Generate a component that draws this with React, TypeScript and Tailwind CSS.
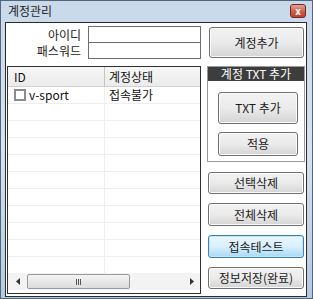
import * as React from "react";

const font = { fontFamily: '"Noto Sans CJK KR", "Liberation Sans", sans-serif' };

function Btn({
  children,
  className = "",
  focused = false
}: {
  children: React.ReactNode;
  className?: string;
  focused?: boolean;
}) {
  return (
    <div
      className={[
        "flex items-center justify-center rounded-[3px] border text-[12px] leading-none text-[#1a1a1a]",
        focused
          ? "border-[#3c7fb1] bg-gradient-to-b from-[#eaf6fd] via-[#d9f0fc] to-[#a7d9f5] shadow-[inset_0_0_0_1px_#c4e5f6]"
          : "border-[#707070] bg-gradient-to-b from-[#f2f2f2] via-[#ebebeb] to-[#d4d4d4] shadow-[inset_0_0_0_1px_#fbfbfb]",
        className
      ].join(" ")}
    >
      {children}
    </div>
  );
}

function Row({ first, second, box }: { first?: string; second?: string; box?: boolean }) {
  return (
    <div className="flex h-[17px] shrink-0 border-b border-[#eeeeee] text-[12px] leading-none text-[#111]">
      <div className="flex w-[97px] items-center border-r border-[#eeeeee] pl-[6px]">
        {box && <div className="mr-[3px] h-[12px] w-[12px] border-2 border-[#8c8c8c] bg-white" />}
        {first}
      </div>
      <div className="flex items-center pl-[4px]">{second}</div>
    </div>
  );
}

export default function App() {
  return (
    <div
      style={font}
      className="flex h-[299px] w-[313px] flex-col border border-[#52667c] bg-gradient-to-b from-[#c9d9ea] via-[#d6e2ef] to-[#b4c9e0]"
    >
      {/* title bar */}
      <div className="flex h-[21px] shrink-0 items-start justify-between pl-[7px] pr-[6px]">
        <span className="mt-[4px] text-[12px] leading-none text-[#1e1e1e]">계정관리</span>
        <div className="mt-[3px] flex h-[14px] w-[16px] items-center justify-center rounded-[3px] border border-[#6b2b22] bg-gradient-to-b from-[#e6a597] via-[#d0604b] to-[#c0412b] text-[10px] font-bold leading-none text-white">
          x
        </div>
      </div>

      {/* client */}
      <div className="ml-[4px] flex h-[275px] w-[302px] border border-[#2a2a2a] bg-white">
        {/* left column */}
        <div className="ml-[1px] flex w-[194px] flex-col">
          <div className="mt-[3px] flex flex-col text-[12px] leading-none text-[#1a1a1a]">
            <div className="flex h-[17px] items-center">
              <span className="w-[74px] text-right">아이디</span>
              <div className="ml-[7px] h-[17px] w-[113px] border border-[#6e6e6e] bg-white" />
            </div>
            <div className="flex h-[16px] items-center">
              <span className="w-[74px] text-right">패스워드</span>
              <div className="ml-[7px] h-[16px] w-[113px] border border-t-0 border-[#6e6e6e] bg-white" />
            </div>
          </div>

          {/* list */}
          <div className="mt-[7px] flex h-[228px] flex-col border border-[#303030] bg-white">
            <div className="flex h-[20px] shrink-0 border-b border-[#d0d0d0] bg-gradient-to-b from-[#f7f7f7] to-[#ebebeb] text-[12px] leading-none text-[#111]">
              <div className="flex w-[97px] items-center border-r border-[#c4c4c4] pl-[6px]">ID</div>
              <div className="flex items-center pl-[4px]">계정상태</div>
            </div>
            <div className="flex flex-1 flex-col overflow-hidden">
              <Row first="v-sport" second="접속불가" box />
              {Array.from({ length: 10 }).map((_, i) => (
                <Row key={i} />
              ))}
            </div>
            <div className="flex h-[17px] shrink-0 items-center bg-[#f3f3f3]">
              <div className="flex w-[19px] items-center justify-center">
                <svg width="4" height="7" viewBox="0 0 4 7">
                  <path d="M4 0L0 3.5L4 7z" fill="#333" />
                </svg>
              </div>
              <div className="flex h-[15px] w-[103px] items-center justify-center rounded-[2px] border border-[#9a9a9a] bg-gradient-to-b from-[#f4f4f4] to-[#dcdcdc]">
                <div className="flex gap-[1px]">
                  <div className="h-[6px] w-[1px] bg-[#555]" />
                  <div className="h-[6px] w-[1px] bg-[#555]" />
                  <div className="h-[6px] w-[1px] bg-[#555]" />
                </div>
              </div>
              <div className="flex-1" />
              <div className="flex w-[17px] items-center justify-center">
                <svg width="4" height="7" viewBox="0 0 4 7">
                  <path d="M0 0L4 3.5L0 7z" fill="#333" />
                </svg>
              </div>
            </div>
            <div className="h-[3px] shrink-0" />
          </div>
        </div>

        {/* right column */}
        <div className="ml-[6px] flex w-[98px] flex-col">
          <Btn className="ml-[2px] mt-[4px] h-[31px] w-[95px]">계정추가</Btn>

          <div className="mt-[8px] flex h-[96px] flex-col border border-[#9a9a9a]">
            <div className="flex h-[14px] items-center justify-center bg-[#3d3d3d] text-[12px] leading-none text-white">
              계정 TXT 추가
            </div>
            <Btn className="ml-[10px] mt-[11px] h-[32px] w-[80px]">TXT 추가</Btn>
            <Btn className="ml-[10px] mt-[8px] h-[24px] w-[80px]">적용</Btn>
          </div>

          <Btn className="ml-[1px] mt-[10px] h-[22px] w-[96px]">선택삭제</Btn>
          <Btn className="ml-[1px] mt-[9px] h-[23px] w-[96px]">전체삭제</Btn>
          <Btn focused className="ml-[1px] mt-[9px] h-[23px] w-[96px]">
            접속테스트
          </Btn>
          <Btn className="ml-[1px] mt-[9px] h-[22px] w-[96px]">정보저장(완료)</Btn>
        </div>
      </div>
    </div>
  );
}
